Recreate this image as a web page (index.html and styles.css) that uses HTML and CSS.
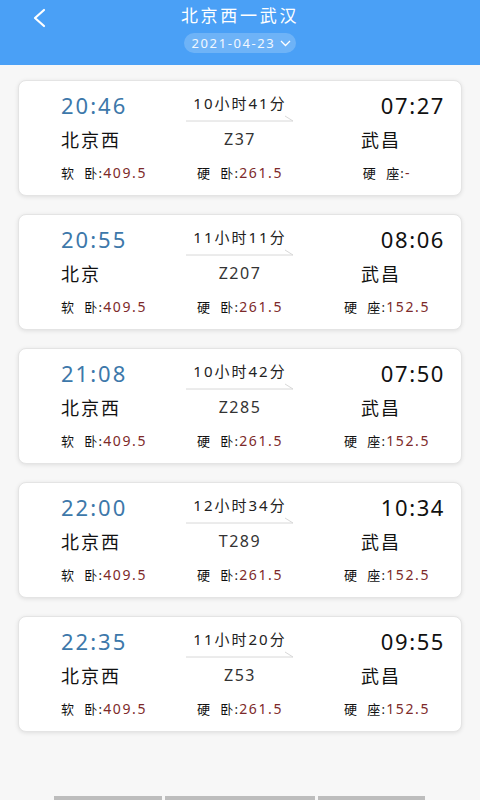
FILE: index.html
```html
<!DOCTYPE html>
<html lang="zh-CN">
<head>
  <meta charset="UTF-8">
  <title>北京西一武汉</title>
  <meta name="viewport" content="width=device-width, initial-scale=1.0">
  <link rel="stylesheet" href="styles.css">
</head>
<body>
  <header class="topbar">
    <a class="back" href="#">
      <svg width="16" height="20" viewBox="0 0 16 20"><path d="M13 2 L4 10 L13 18" fill="none" stroke="#fff" stroke-width="2.2" stroke-linecap="round" stroke-linejoin="round"/></svg>
    </a>
    <div class="heading">
      <h1 class="route">北京西一武汉</h1>
      <div class="date-pill">2021-04-23
        <svg width="11" height="7" viewBox="0 0 11 7"><path d="M1 1 L5.5 5.5 L10 1" fill="none" stroke="#fff" stroke-width="1.3"/></svg>
      </div>
    </div>
  </header>

  <main class="train-list">
    <div class="train-card">
      <span class="dep-time">20:46</span>
      <span class="duration">10小时41分<svg width="108" height="7" viewBox="0 0 108 7"><path d="M0 6 H107 L99 1" fill="none" stroke="#d8d8d8" stroke-width="1"/></svg></span>
      <span class="arr-time">07:27</span>
      <span class="station">北京西</span>
      <span class="train-no">Z37</span>
      <span class="station end">武昌</span>
      <span class="price">软&nbsp;&nbsp;卧:<em>409.5</em></span>
      <span class="price mid">硬&nbsp;&nbsp;卧:<em>261.5</em></span>
      <span class="price last">硬&nbsp;&nbsp;座:<em>-</em></span>
    </div>

    <div class="train-card">
      <span class="dep-time">20:55</span>
      <span class="duration">11小时11分<svg width="108" height="7" viewBox="0 0 108 7"><path d="M0 6 H107 L99 1" fill="none" stroke="#d8d8d8" stroke-width="1"/></svg></span>
      <span class="arr-time">08:06</span>
      <span class="station">北京</span>
      <span class="train-no">Z207</span>
      <span class="station end">武昌</span>
      <span class="price">软&nbsp;&nbsp;卧:<em>409.5</em></span>
      <span class="price mid">硬&nbsp;&nbsp;卧:<em>261.5</em></span>
      <span class="price last">硬&nbsp;&nbsp;座:<em>152.5</em></span>
    </div>

    <div class="train-card">
      <span class="dep-time">21:08</span>
      <span class="duration">10小时42分<svg width="108" height="7" viewBox="0 0 108 7"><path d="M0 6 H107 L99 1" fill="none" stroke="#d8d8d8" stroke-width="1"/></svg></span>
      <span class="arr-time">07:50</span>
      <span class="station">北京西</span>
      <span class="train-no">Z285</span>
      <span class="station end">武昌</span>
      <span class="price">软&nbsp;&nbsp;卧:<em>409.5</em></span>
      <span class="price mid">硬&nbsp;&nbsp;卧:<em>261.5</em></span>
      <span class="price last">硬&nbsp;&nbsp;座:<em>152.5</em></span>
    </div>

    <div class="train-card">
      <span class="dep-time">22:00</span>
      <span class="duration">12小时34分<svg width="108" height="7" viewBox="0 0 108 7"><path d="M0 6 H107 L99 1" fill="none" stroke="#d8d8d8" stroke-width="1"/></svg></span>
      <span class="arr-time">10:34</span>
      <span class="station">北京西</span>
      <span class="train-no">T289</span>
      <span class="station end">武昌</span>
      <span class="price">软&nbsp;&nbsp;卧:<em>409.5</em></span>
      <span class="price mid">硬&nbsp;&nbsp;卧:<em>261.5</em></span>
      <span class="price last">硬&nbsp;&nbsp;座:<em>152.5</em></span>
    </div>

    <div class="train-card">
      <span class="dep-time">22:35</span>
      <span class="duration">11小时20分<svg width="108" height="7" viewBox="0 0 108 7"><path d="M0 6 H107 L99 1" fill="none" stroke="#d8d8d8" stroke-width="1"/></svg></span>
      <span class="arr-time">09:55</span>
      <span class="station">北京西</span>
      <span class="train-no">Z53</span>
      <span class="station end">武昌</span>
      <span class="price">软&nbsp;&nbsp;卧:<em>409.5</em></span>
      <span class="price mid">硬&nbsp;&nbsp;卧:<em>261.5</em></span>
      <span class="price last">硬&nbsp;&nbsp;座:<em>152.5</em></span>
    </div>
  </main>

  <footer class="bottom-tabs">
    <span class="tab t1"></span>
    <span class="tab t2"></span>
    <span class="tab t3"></span>
  </footer>
</body>
</html>
```

FILE: styles.css
```css
* {
  box-sizing: border-box;
}
body {
  margin: 0;
  background: #f7f7f7;
  font-family: 'Noto Sans', 'Noto Sans CJK SC', sans-serif;
  color: #222;
  height: 800px;
  overflow: hidden;
}
.topbar {
  height: 65px;
  background: #4aa0f6;
  display: grid;
  grid-template-columns: 1fr auto 1fr;
}
.back {
  display: block;
  padding: 8px 0 0 31px;
}
.heading {
  display: flex;
  flex-direction: column;
  align-items: center;
}
.route {
  margin: 4px 0 0;
  font-size: 17px;
  font-weight: normal;
  line-height: 24px;
  letter-spacing: 2.7px;
  color: #fff;
}
.date-pill {
  margin-top: 5px;
  height: 20px;
  padding: 0 5px 0 8px;
  border-radius: 10px;
  background: rgba(255,255,255,0.2);
  color: #f2f8ff;
  font-size: 13px;
  line-height: 20px;
  letter-spacing: 1.6px;
  display: flex;
  align-items: center;
  gap: 5px;
}
.train-list {
  padding: 15px 18px 0;
  display: flex;
  flex-direction: column;
  gap: 18px;
}
.train-card {
  height: 116px;
  background: #fff;
  border: 1px solid #e4e4e4;
  border-radius: 8px;
  box-shadow: 0 1px 4px rgba(0,0,0,0.1);
  padding: 10px 18px 10px 42px;
  display: grid;
  grid-template-columns: 110px 138px 134px;
  grid-template-rows: 28px 40px 26px;
  align-items: center;
}
.dep-time,
.arr-time {
  font-size: 22px;
  letter-spacing: 2px;
  line-height: 28px;
}
.dep-time {
  color: #3d78aa;
}
.arr-time {
  color: #111;
  text-align: right;
  letter-spacing: 1.6px;
  margin-right: -2px;
}
.duration {
  align-self: start;
  display: flex;
  flex-direction: column;
  align-items: center;
  font-size: 15px;
  line-height: 24px;
  letter-spacing: 2px;
  color: #222;
}
.duration svg {
  display: block;
}
.station {
  font-size: 18px;
  letter-spacing: 2px;
  color: #111;
}
.station.end {
  padding-left: 52px;
}
.train-no {
  text-align: center;
  font-size: 16px;
  letter-spacing: 1.5px;
  color: #333;
}
.price {
  font-size: 13px;
  letter-spacing: 1.2px;
  color: #111;
  white-space: nowrap;
}
.price em {
  font-style: normal;
  color: #7d2a2a;
  font-size: 14px;
  letter-spacing: 1.6px;
}
.price.mid {
  text-align: center;
}
.price.last {
  text-align: center;
  padding-left: 22px;
}
.bottom-tabs {
  margin-top: 64px;
  padding-left: 54px;
  display: flex;
  gap: 3px;
}
.tab {
  height: 6px;
  background: #bdbdbd;
}
.t1 {
  width: 108px;
}
.t2 {
  width: 150px;
}
.t3 {
  width: 107px;
}
```
